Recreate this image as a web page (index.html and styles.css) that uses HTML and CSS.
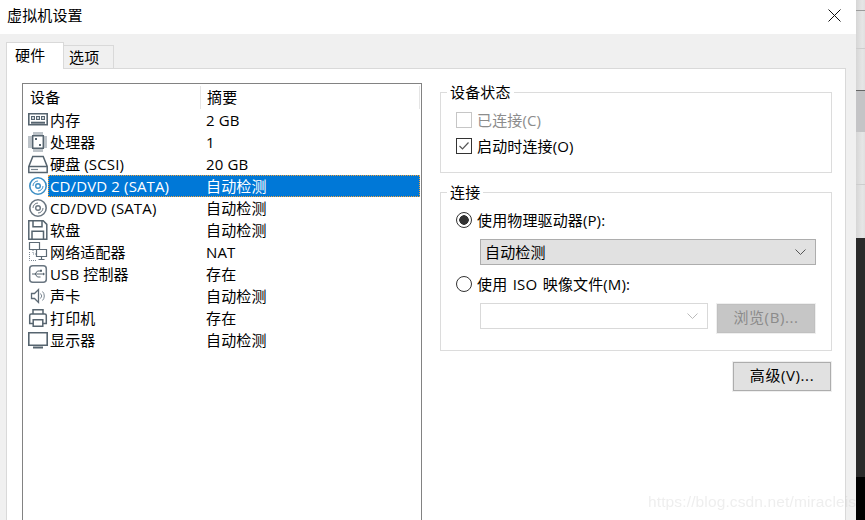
FILE: index.html
```html
<!DOCTYPE html>
<html lang="zh-CN">
<head>
  <meta charset="UTF-8">
  <title>虚拟机设置</title>
  <link rel="stylesheet" href="styles.css">
</head>
<body>
  <div class="screen">
    <div class="dialog">
      <!-- title bar -->
      <div class="titlebar">
        <span>虚拟机设置</span>
        <svg class="close" width="13" height="13" viewBox="0 0 13 13"><path d="M.5.5l12 12M12.5.5l-12 12" stroke="#111" fill="none"/></svg>
      </div>

      <div class="tabs">
        <div class="tab active">硬件</div>
        <div class="tab">选项</div>
      </div>

      <div class="panel">
        <!-- device list -->
        <div class="list">
          <div class="list-head">
            <span class="head-name">设备</span>
            <span class="head-sum">摘要</span>
          </div>

          <div class="row">
            <svg class="icon" width="20" height="22" viewBox="0 0 20 22"><path d="M.8 4.800h18.400v11H.8z" fill="none" stroke="#56646f" stroke-width="1.600"/><path d="M3 13.700h14" stroke="#56646f" stroke-width="2"/><path d="M3 7h4v4H3zM8 7h4v4H8zM13 7h4v4h-4z" fill="#56646f"/><path d="M4 8h2v2H4zM9 8h2v2H9zM14 8h2v2h-2z" fill="#cfd5da"/></svg>
            <div class="cells"><span class="name">内存</span><span class="sum">2 GB</span></div>
          </div>
          <div class="row">
            <svg class="icon" width="20" height="22" viewBox="0 0 20 22"><path d="M4.700 4.700h10.600v12.600H4.700z" fill="none" stroke="#56646f" stroke-width="1.500"/><path d="M6 1v3M8 1v3M10 1v3M12 1v3M14 1v3M6 18v3M8 18v3M10 18v3M12 18v3M14 18v3M0 6h4M0 8h4M0 10h4M0 12h4M0 14h4M0 16h4M16 6h3M16 8h3M16 10h3M16 12h3M16 14h3M16 16h3" stroke="#7b8792"/><path d="M7 7h2v2H7zM11 13h2v2h-2z" fill="#56646f"/></svg>
            <div class="cells"><span class="name">处理器</span><span class="sum">1</span></div>
          </div>
          <div class="row">
            <svg class="icon" width="20" height="22" viewBox="0 0 20 22"><path d="M.8 13.500l4-10h10.400l4 10v6H.8zM.8 13.500h18.400" fill="none" stroke="#56646f" stroke-width="1.500"/><path d="M3 16.500h7" stroke="#7b8792" stroke-width="1.200"/></svg>
            <div class="cells"><span class="name">硬盘 (SCSI)</span><span class="sum">20 GB</span></div>
          </div>
          <div class="row selected">
            <svg class="icon" width="20" height="22" viewBox="0 0 20 22"><g fill="none" stroke="#3d8fc4"><circle cx="10" cy="11" r="8.200" stroke-width="1.600"/><circle cx="10" cy="11" r="2.300" stroke-width="1.400"/><path d="M5 11a5 5 0 0 1 5-5M15 11a5 5 0 0 1-5 5"/></g></svg>
            <div class="cells"><span class="name">CD/DVD 2 (SATA)</span><span class="sum">自动检测</span></div>
          </div>
          <div class="row">
            <svg class="icon" width="20" height="22" viewBox="0 0 20 22"><g fill="none" stroke="#6a7681"><circle cx="10" cy="11" r="8.200" stroke-width="1.600"/><circle cx="10" cy="11" r="2.300" stroke-width="1.400"/><path d="M5 11a5 5 0 0 1 5-5M15 11a5 5 0 0 1-5 5"/></g></svg>
            <div class="cells"><span class="name">CD/DVD (SATA)</span><span class="sum">自动检测</span></div>
          </div>
          <div class="row">
            <svg class="icon" width="20" height="22" viewBox="0 0 20 22"><path d="M.8 1.800h14.400l3.600 3.600v14.800H.8zM5 1.800v6h9v-6M4 20.200v-8h11.500v8" fill="none" stroke="#56646f" stroke-width="1.500"/></svg>
            <div class="cells"><span class="name">软盘</span><span class="sum">自动检测</span></div>
          </div>
          <div class="row">
            <svg class="icon" width="20" height="22" viewBox="0 0 20 22"><path d="M1.500 1.500h10v7h-10zM8.500 8.500h10v7h-10z" fill="#fff" stroke="#5d6a75" stroke-width="1.200"/><path d="M13.500 15.500v3M10.500 18.500h6" stroke="#5d6a75" stroke-width="1.200"/><path d="M1.500 11v8.500h7M5 9v4h3" fill="none" stroke="#7b8792" stroke-dasharray="1 1"/></svg>
            <div class="cells"><span class="name">网络适配器</span><span class="sum">NAT</span></div>
          </div>
          <div class="row">
            <svg class="icon" width="20" height="22" viewBox="0 0 20 22"><rect x="1.700" y="2.700" width="16.600" height="16.600" rx="3" fill="none" stroke="#6a7681" stroke-width="1.500"/><path d="M4 11h11M7 11l2.500-3h3M7 11l2.500 3h3" fill="none" stroke="#56646f"/><path d="M15 9.500l2 1.500-2 1.500zM12 6.800h2v2h-2z" fill="#56646f"/></svg>
            <div class="cells"><span class="name">USB 控制器</span><span class="sum">存在</span></div>
          </div>
          <div class="row">
            <svg class="icon" width="20" height="22" viewBox="0 0 20 22"><path d="M3.500 8.500h3l4-4v13l-4-4h-3z" fill="none" stroke="#5d6a75" stroke-width="1.300"/><path d="M12.500 8.500a3.500 3.500 0 0 1 0 5M14.500 6.500a6.500 6.500 0 0 1 0 9" fill="none" stroke="#7b8792"/></svg>
            <div class="cells"><span class="name">声卡</span><span class="sum">自动检测</span></div>
          </div>
          <div class="row">
            <svg class="icon" width="20" height="22" viewBox="0 0 20 22"><path d="M5 7V2.700h10V7M5 16.500H1.700V8.500q0-1.500 1.500-1.500h13.600q1.500 0 1.500 1.500v8H15M5.200 12.700h9.600v6.600H5.200z" fill="none" stroke="#56646f" stroke-width="1.500"/></svg>
            <div class="cells"><span class="name">打印机</span><span class="sum">存在</span></div>
          </div>
          <div class="row">
            <svg class="icon" width="20" height="22" viewBox="0 0 20 22"><path d="M.8 3.800h18.400v12.400H.8z" fill="none" stroke="#56646f" stroke-width="1.600"/><path d="M5 18.500h10" stroke="#56646f" stroke-width="2"/></svg>
            <div class="cells"><span class="name">显示器</span><span class="sum">自动检测</span></div>
          </div>
        </div>

        <!-- right side -->
        <div class="settings">
          <fieldset class="group status">
            <legend>设备状态</legend>
            <div class="option disabled"><span class="check"></span><span class="label">已连接(C)</span></div>
            <div class="option">
              <span class="check on"><svg width="14" height="14" viewBox="0 0 14 14"><path d="M2.500 7l3 3 6-6.500" fill="none" stroke="#555" stroke-width="1.200"/></svg></span><span class="label">启动时连接(O)</span>
            </div>
          </fieldset>

          <fieldset class="group connect">
            <legend>连接</legend>
            <div class="option"><span class="radio on"></span><span class="label">使用物理驱动器(P):</span></div>
            <div class="combo filled">
              <span class="label">自动检测</span>
              <svg width="11" height="6" viewBox="0 0 11 6"><path d="M.5.500l5 5 5-5" fill="none" stroke="#555"/></svg>
            </div>
            <div class="option second"><span class="radio"></span><span class="label iso">使用 ISO 映像文件(M):</span></div>
            <div class="iso-row">
              <div class="combo empty">
                <svg width="11" height="6" viewBox="0 0 11 6"><path d="M.5.500l5 5 5-5" fill="none" stroke="#bbb"/></svg>
              </div>
              <div class="btn browse">浏览(B)...</div>
            </div>
          </fieldset>

          <div class="actions">
            <div class="btn advanced">高级(V)...</div>
          </div>
        </div>
      </div>
    </div>

    <!-- part of the desktop behind the dialog -->
    <div class="behind">
      <div class="strip s1"></div>
      <div class="strip s2"></div>
      <div class="strip s3"></div>
      <div class="strip thumb"></div>
      <div class="strip s4"></div>
      <div class="strip s5"></div>
      <div class="dark"></div>
      <div class="black"></div>
    </div>

    <div class="watermark">https://blog.csdn.net/miracleis</div>
  </div>
</body>
</html>
```

FILE: styles.css
```css
*{
  margin: 0;
  padding: 0;
  box-sizing: border-box;
}

body{
  font-family: "Open Sans", "Noto Sans CJK SC", sans-serif;
  font-size: 15px;
  line-height: 18px;
  letter-spacing: .13px;
  color: #000;
  overflow: hidden;
}

.screen{
  position: relative;
  display: flex;
  width: 865px;
  height: 520px;
  overflow: hidden;
}

.dialog{
  width: 856px;
  height: 520px;
  display: flex;
  flex-direction: column;
  background: #f0f0f0;
}

/* title */
.titlebar{
  height: 34px;
  flex: none;
  padding: 6px 15px 0 7px;
  background: #fff;
  display: flex;
  justify-content: space-between;
}

.close{
  margin-top: 3px;
}

/* tabs */
.tabs{
  display: flex;
  align-items: flex-end;
  height: 34px;
  flex: none;
  padding-left: 6px;
}

.tab{
  width: 51px;
  height: 23px;
  line-height: 22px;
  padding-left: 5px;
  border: 1px solid #d9d9d9;
  border-bottom: 0;
  margin-left: -1px;
  background: #f0f0f0;
}

.tab.active{
  width: 58px;
  height: 27px;
  line-height: 25px;
  padding-left: 8px;
  margin-left: 0;
  margin-bottom: -1px;
  background: #fff;
  position: relative;
  z-index: 1;
}

.panel{
  flex: 1;
  min-height: 0;
  margin: 0 10px 0 6px;
  padding: 14px 14px 0 15px;
  display: flex;
  gap: 18px;
  background: #fff;
  border: 1px solid #d9d9d9;
  border-bottom: 0;
}

/* list */
.list{
  width: 400px;
  flex: none;
  padding: 0 1px 0 0;
  border: 1px solid #828282;
  border-bottom: 0;
}

.list-head{
  display: flex;
  height: 25px;
  padding-top: 2px;
  line-height: 22px;
}

.head-name{
  width: 178px;
  padding-left: 7px;
  border-right: 1px solid #e5e5e5;
}

.head-sum{
  flex: 1;
  padding-left: 6px;
  border-right: 1px solid #e5e5e5;
}

.row{
  display: flex;
  height: 22px;
  padding-left: 5px;
  line-height: 22px;
}

.icon{
  flex: none;
}

.cells{
  display: flex;
  flex: 1;
}

.name{
  width: 158px;
  padding-left: 2px;
}

.selected .cells{
  background: #0078d7;
  color: #fff;
  outline: 1px dotted #f2a23c;
  outline-offset: -1px;
}

/* right */
.settings{
  width: 392px;
  flex: none;
}

.group{
  border: 1px solid #dcdcdc;
  margin-bottom: 10px;
}

.group legend{
  margin-left: -9px;
  padding: 0 3px;
  line-height: 18px;
}

.status{
  height: 90px;
  padding: 6px 15px 0;
}

.connect{
  height: 168px;
  padding: 6px 15px 0;
}

.option{
  display: flex;
  align-items: center;
  height: 26px;
  gap: 5px;
}

.label{
  margin-bottom: 1px;
}

.iso{
  word-spacing: 1.500px;
}

.option.disabled{
  color: #8c8c8c;
}

.check{
  width: 16px;
  height: 16px;
  flex: none;
  display: flex;
  align-items: center;
  justify-content: center;
  border: 1px solid #333;
}

.disabled .check{
  border-color: #c6c6c6;
}

.radio{
  width: 16px;
  height: 16px;
  flex: none;
  border: 1px solid #333;
  border-radius: 50%;
  background: #fff;
}

.radio.on{
  background: radial-gradient(circle, #333 0 4.500px, #fff 5px);
}

.second{
  margin-top: 6px;
}

.combo{
  display: flex;
  align-items: center;
  justify-content: space-between;
  height: 26px;
  margin-left: 24px;
  padding: 0 9px 0 4px;
}

.filled{
  margin-top: 6px;
  background: #e1e1e1;
  border: 1px solid #adadad;
}

.iso-row{
  display: flex;
  justify-content: space-between;
  align-items: flex-start;
  height: 30px;
  margin-top: 6px;
  margin-left: 24px;
}

.empty{
  width: 228px;
  margin-left: 0;
  justify-content: flex-end;
  border: 1px solid #d9d9d9;
}

.btn{
  display: flex;
  align-items: center;
  justify-content: center;
  padding-bottom: 3px;
  letter-spacing: .6px;
  border: 1px solid #adadad;
  background: #e1e1e1;
  outline: 1px solid #efefef;
}

.browse{
  width: 98px;
  height: 29px;
  margin-top: 1px;
  margin-right: 1px;
  border-color: #c0c0c0;
  background: #c6c6c6;
  color: #8b8b8b;
}

.actions{
  display: flex;
  justify-content: flex-end;
  padding-top: 1px;
  padding-right: 1px;
}

.advanced{
  width: 98px;
  height: 29px;
}

/* stuff behind the window */
.behind{
  width: 9px;
  flex: none;
  display: flex;
  flex-direction: column;
}

.strip{
  background: linear-gradient(90deg, #d6d6d6, #e6e6e6 70%, #e0e0e0);
  border-bottom: 1px solid #cdcdcd;
}

.s1{ height: 11px; border-bottom-color: #9c9c9c; }
.s2{ height: 38px; }
.s3{ height: 42px; border-bottom-color: #666; }
.thumb{ height: 41px; background: #c4c4c6; border-bottom: 0; }
.s4{ height: 53px; }
.s5{ height: 53px; border-bottom: 0; }

.dark{
  height: 239px;
  background: #2a2a2a;
}

.black{
  flex: 1;
  background: #000;
}

/* blog watermark */
.watermark{
  position: absolute;
  left: 648px;
  top: 492px;
  font-family: "Liberation Sans", sans-serif;
  font-size: 15.500px;
  line-height: 20px;
  color: rgba(200, 200, 200, .3);
  white-space: nowrap;
  filter: blur(.4px);
}
```
